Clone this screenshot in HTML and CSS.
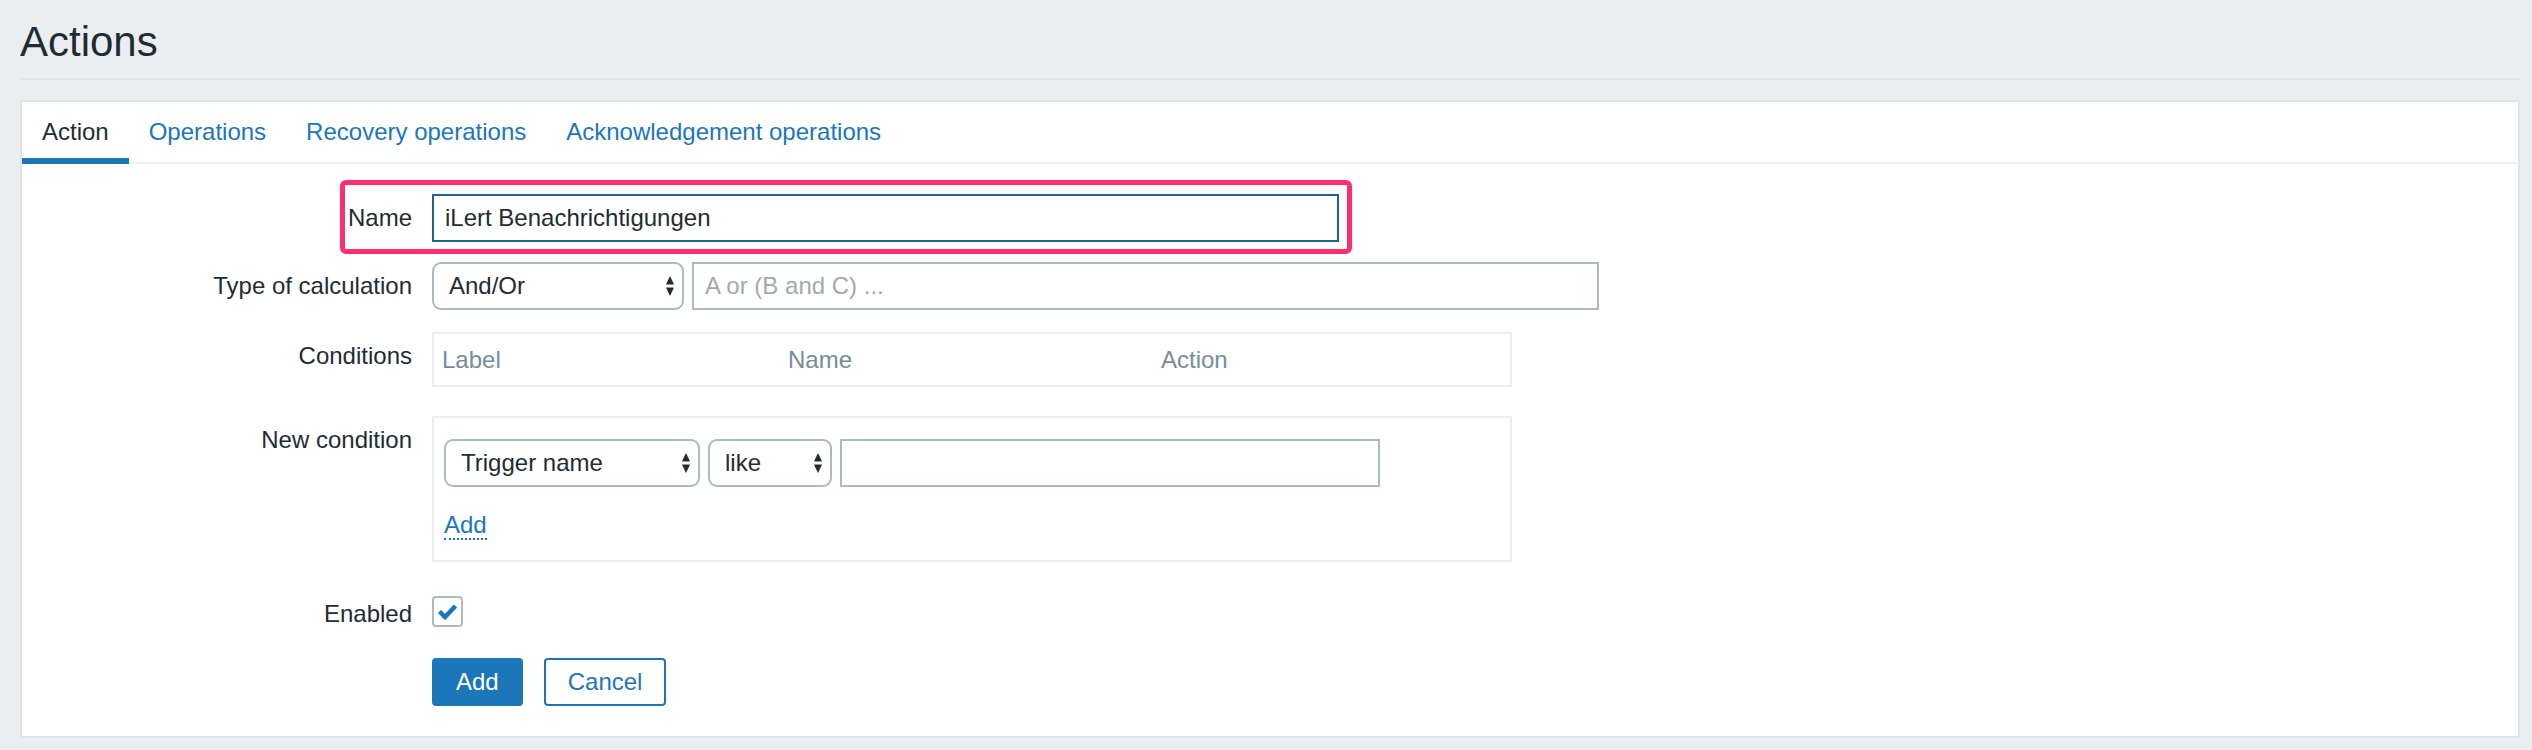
FILE: index.html
```html
<!DOCTYPE html>
<html lang="en">
<head>
<meta charset="utf-8">
<title>Actions</title>
<link rel="stylesheet" href="styles.css">
</head>
<body>
<header class="page-header">
  <h1 class="page-title">Actions</h1>
</header>
<main class="card">
  <nav class="tabs">
    <a class="tab tab-active">Action</a>
    <a class="tab">Operations</a>
    <a class="tab">Recovery operations</a>
    <a class="tab">Acknowledgement operations</a>
  </nav>
  <form class="form">
    <div class="row row-name">
      <label class="label">Name</label>
      <div class="field">
        <input class="input input-focus input-std" type="text" value="iLert Benachrichtigungen">
      </div>
      <div class="highlight"></div>
    </div>

    <div class="row row-calc">
      <label class="label">Type of calculation</label>
      <div class="field inline">
        <div class="select select-calc"><span>And/Or</span><svg class="arrows" width="8" height="20" viewBox="0 0 8 20"><polygon points="0,8.5 4,0 8,8.5"/><polygon points="0,11.5 8,11.5 4,20"/></svg></div>
        <input class="input input-std" type="text" placeholder="A or (B and C) ...">
      </div>
    </div>

    <div class="row row-conditions">
      <label class="label">Conditions</label>
      <div class="field">
        <div class="cond-table">
          <span>Label</span><span>Name</span><span>Action</span>
        </div>
      </div>
    </div>

    <div class="row row-new">
      <label class="label">New condition</label>
      <div class="field">
        <div class="new-box">
          <div class="inline">
            <div class="select select-trigger"><span>Trigger name</span><svg class="arrows" width="8" height="20" viewBox="0 0 8 20"><polygon points="0,8.5 4,0 8,8.5"/><polygon points="0,11.5 8,11.5 4,20"/></svg></div>
            <div class="select select-like"><span>like</span><svg class="arrows" width="8" height="20" viewBox="0 0 8 20"><polygon points="0,8.5 4,0 8,8.5"/><polygon points="0,11.5 8,11.5 4,20"/></svg></div>
            <input class="input input-cond" type="text">
          </div>
          <div class="add-line"><a class="link-add">Add</a></div>
        </div>
      </div>
    </div>

    <div class="row row-enabled">
      <label class="label">Enabled</label>
      <div class="field">
        <span class="checkbox"><svg width="27" height="27" viewBox="0 0 27 27"><polyline points="5.5,13.5 11,19 21.5,8" fill="none" stroke="#1b76ba" stroke-width="4.5"/></svg></span>
      </div>
    </div>

    <div class="row row-buttons">
      <span class="label"></span>
      <div class="field inline buttons">
        <button type="button" class="btn btn-primary">Add</button>
        <button type="button" class="btn btn-alt">Cancel</button>
      </div>
    </div>
  </form>
</main>
</body>
</html>
```

FILE: styles.css
```css
* { box-sizing: border-box; }

html, body {
  margin: 0;
}

body {
  padding: 0 12px 12px 20px;
  background: #ebeef0;
  font-family: "Liberation Sans", Arial, sans-serif;
  font-size: 24px;
  color: #1f2c33;
}

.page-header {
  padding: 18px 0 12px;
  border-bottom: 2px solid #dfe3e6;
}

.page-title {
  margin: 0;
  font-size: 42px;
  line-height: 48px;
  font-weight: normal;
  color: #1f2c33;
}

.card {
  margin-top: 20px;
  background: #fff;
  border: 2px solid #dfe3e6;
}

.tabs {
  display: flex;
  border-bottom: 2px solid #ebeef0;
}

.tab {
  padding: 16px 20px 12px;
  line-height: 28px;
  color: #1b76ba;
  border-bottom: 6px solid transparent;
  margin-bottom: -2px;
  cursor: pointer;
}

.tab-active {
  color: #1f2c33;
  border-bottom-color: #1b76ba;
}

.form {
  padding: 30px 0 30px;
}

.row {
  display: grid;
  grid-template-columns: 390px 1fr;
  column-gap: 20px;
  align-items: start;
}

.row-name { position: relative; }
.row-calc { margin-top: 20px; }
.row-conditions { margin-top: 22px; }
.row-new { margin-top: 29px; }
.row-enabled { margin-top: 28px; }
.row-buttons { margin-top: 30px; }

.label {
  text-align: right;
  line-height: 28px;
  padding-top: 10px;
  color: #1f2c33;
}

.field { min-width: 0; }

.inline {
  display: flex;
  align-items: center;
  gap: 8px;
}

.input {
  height: 48px;
  border: 2px solid #acbbc2;
  border-radius: 0;
  padding: 0 11px;
  font: inherit;
  font-size: 24px;
  color: #1f2c33;
  background: #fff;
  outline: none;
}

.input::placeholder {
  color: #a2a9ae;
}

.input-std { width: 907px; }
.input-focus { border-color: #1b6296; }
.input-cond { width: 540px; }

.highlight {
  position: absolute;
  left: 318px;
  top: -14px;
  width: 1012px;
  height: 74px;
  border: 5px solid #ff2e6d;
  border-radius: 6px;
  pointer-events: none;
}

.select {
  display: flex;
  align-items: center;
  justify-content: space-between;
  height: 48px;
  padding: 0 8px 0 15px;
  border: 2px solid #acbbc2;
  border-radius: 9px;
  background: #fff;
  line-height: 28px;
  color: #1f2c33;
}

.select-calc { width: 252px; }
.select-trigger { width: 256px; }
.select-like { width: 124px; }

.arrows { fill: #1f2c33; flex: none; }

.cond-table {
  width: 1080px;
  border: 2px solid #ebeef0;
  padding: 12px 8px 11px;
  display: grid;
  grid-template-columns: 346px 373px 1fr;
  line-height: 28px;
  color: #768d99;
}

.new-box {
  width: 1080px;
  border: 2px solid #ebeef0;
  padding: 21px 10px 21px;
}

.new-box .inline { padding-left: 0; }

.add-line {
  margin-top: 24px;
  line-height: 28px;
}

.link-add {
  color: #1b76ba;
  line-height: 24px;
  border-bottom: 2px dotted #1b76ba;
  cursor: pointer;
}

.checkbox {
  display: flex;
  align-items: center;
  justify-content: center;
  width: 31px;
  height: 31px;
  margin-top: 6px;
  border: 2px solid #acbbc2;
  border-radius: 4px;
  background: #fff;
}

.buttons { gap: 21px; }

.btn {
  height: 48px;
  padding: 0 22px;
  border: 2px solid #1b76ba;
  border-radius: 4px;
  font: inherit;
  font-size: 24px;
  line-height: 28px;
  cursor: pointer;
}

.btn-primary {
  background: #1b76ba;
  color: #fff;
}

.btn-alt {
  background: #fff;
  color: #1b76ba;
}
```
